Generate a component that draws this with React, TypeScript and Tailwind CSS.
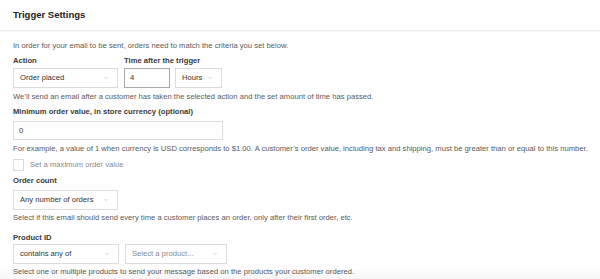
import { ChevronDown } from "lucide-react";

const font = { fontFamily: '"Liberation Sans", Arial, sans-serif' };

function Select({ label, width, muted }: { label: string; width: string; muted?: boolean }) {
  return (
    <div
      className={`flex h-[20px] items-center justify-between border border-[#dcdcdc] bg-white pl-[6px] pr-[8px] ${width}`}
    >
      <span className={muted ? "text-[#8a8a8a]" : "text-[#333]"}>{label}</span>
      <ChevronDown className="h-[6px] w-[6px] text-[#c4c4c4]" strokeWidth={3} />
    </div>
  );
}

export default function App() {
  return (
    <div className="relative h-[279px] w-[600px] overflow-hidden whitespace-nowrap bg-white text-[7.65px] leading-[10px] text-[#5a5a5a]" style={font}>
      <div className="flex h-[31px] items-center border-b border-[#ebebeb] px-[13px] shadow-[0_1px_1px_rgba(0,0,0,0.03)]">
        <h1 className="text-[9.5px] font-bold text-[#222]">Trigger Settings</h1>
      </div>

      <div className="px-[13px] pt-[10px]">
        <p>In order for your email to be sent, orders need to match the criteria you set below.</p>

        <div className="mt-[5px] flex gap-[6px]">
          <div className="flex flex-col gap-[2px]">
            <span className="font-semibold text-[#3a3a3a]">Action</span>
            <Select label="Order placed" width="w-[105px]" />
          </div>
          <div className="flex flex-col gap-[2px]">
            <span className="font-semibold text-[#3a3a3a]">Time after the trigger</span>
            <div className="flex gap-[5px]">
              <div className="flex h-[20px] w-[46px] items-center border border-[#a9a9a9] px-[5px] text-[#333]">4</div>
              <Select label="Hours" width="w-[47px]" />
            </div>
          </div>
        </div>

        <p className="mt-[4px]">
          We’ll send an email after a customer has taken the selected action and the set amount of time has passed.
        </p>

        <div className="mt-[5px] font-semibold text-[#3a3a3a]">Minimum order value, in store currency (optional)</div>
        <div className="mt-[4px] flex h-[19px] w-[210px] items-center border border-[#dcdcdc] px-[5px] text-[#333]">0</div>
        <p className="mt-[4px]">
          For example, a value of 1 when currency is USD corresponds to $1.00. A customer’s order value, including tax and shipping, must be greater than or equal to this number.
        </p>

        <label className="mt-[5px] flex items-center gap-[6px]">
          <span className="h-[12px] w-[11px] border border-[#dcdcdc] bg-white" />
          <span className="text-[#8a8a8a]">Set a maximum order value</span>
        </label>

        <div className="mt-[5px] font-semibold text-[#3a3a3a]">Order count</div>
        <div className="mt-[4px]">
          <Select label="Any number of orders" width="w-[105px]" />
        </div>
        <p className="mt-[3px]">
          Select if this email should send every time a customer places an order, only after their first order, etc.
        </p>

        <div className="mt-[10px] font-semibold text-[#3a3a3a]">Product ID</div>
        <div className="mt-[1px] flex gap-[6px]">
          <Select label="contains any of" width="w-[106px]" />
          <Select label="Select a product..." width="w-[102px]" muted />
        </div>
        <p className="mt-[3px]">Select one or multiple products to send your message based on the products your customer ordered.</p>
      </div>

      <div className="pointer-events-none absolute bottom-0 left-0 h-[12px] w-full bg-gradient-to-b from-transparent to-[rgba(0,0,0,0.04)]" />
    </div>
  );
}
